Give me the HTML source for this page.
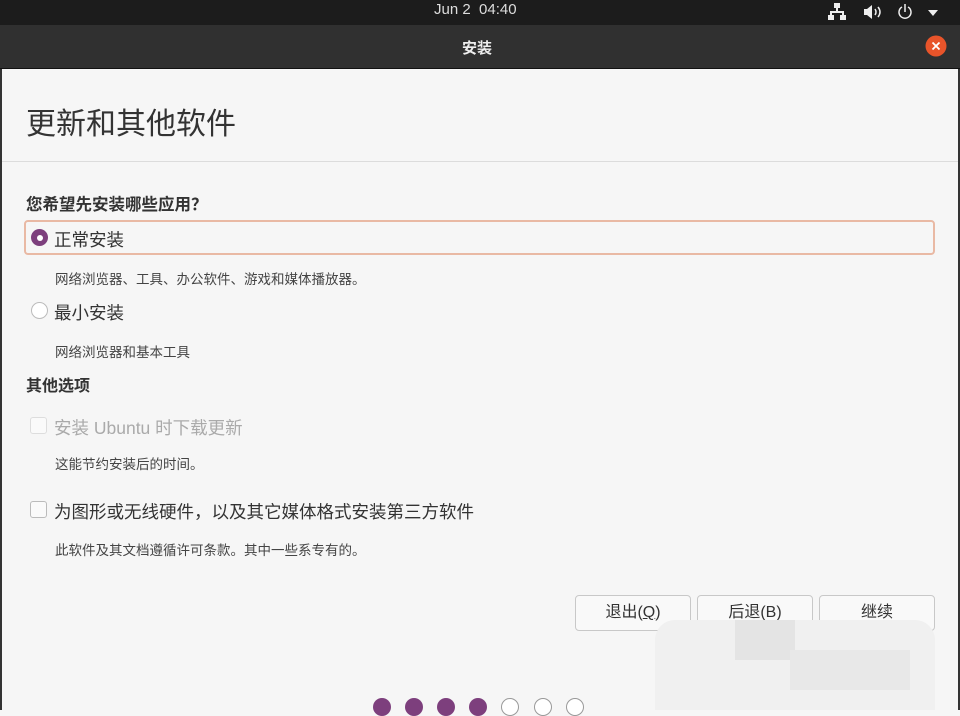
<!DOCTYPE html>
<html><head><meta charset="utf-8">
<style>
*{margin:0;padding:0;box-sizing:border-box}
body{width:960px;height:710px;overflow:hidden;background:#f6f6f6;font-family:"Liberation Sans","Noto Sans CJK SC",sans-serif;position:relative;color:#333}
.a{position:absolute;white-space:nowrap}
#top{left:0;top:0;width:960px;height:25px;background:#1c1c1c;color:#ddd;font-size:15px}
#tb{left:0;top:25px;width:960px;height:44px;background:#303030;border-bottom:1px solid #111}
#win{left:0;top:69px;width:960px;height:641px;background:#f6f6f6;border-left:2px solid #333;border-right:2px solid #333}
.s{font-size:13.5px;color:#444}
.b{font-weight:bold;font-size:16px;color:#333}
.radio{width:17px;height:17px;border-radius:50%}
.cb{width:17px;height:17px;border:1px solid #bbb;border-radius:3px;background:#fafafa}
.btn{top:595px;width:116px;height:36px;border:1px solid #c8c8c8;border-radius:4px;background:#f9f9f9;font-size:16px;text-align:center;line-height:34px;color:#333}
.dot{top:698px;width:18px;height:18px;border-radius:50%}
.f{background:#7d3f7d}
.e{border:1.5px solid #999;background:#fff}
</style></head><body>
<div id="top" class="a"><div class="a" style="left:434px;top:1px">Jun 2&nbsp; 04:40</div>
<svg class="a" style="left:828px;top:2px" width="120" height="20" viewBox="0 0 120 20">
<g fill="#eee"><rect x="6" y="1" width="6" height="5"/><rect x="8" y="6" width="2" height="4"/><rect x="2" y="9" width="14" height="2"/><rect x="2" y="9" width="2" height="5"/><rect x="14" y="9" width="2" height="5"/><rect x="0" y="13" width="6" height="5"/><rect x="12" y="13" width="6" height="5"/>
<path d="M36 7h3l5-4v14l-5-4h-3z"/></g>
<g fill="none" stroke="#eee" stroke-width="1.5"><path d="M47 7q2 3 0 6M50 5q4 5 0 10"/><path d="M74 5a6 6 0 1 0 6 0"/><path d="M77 2v8"/></g>
<path d="M100 8h10l-5 6z" fill="#eee"/></svg></div>
<div id="tb" class="a"><div class="a" style="left:462px;top:12px;color:#eee;font-size:15px;font-weight:bold">安装</div>
<svg class="a" style="left:925px;top:10px" width="22" height="22"><circle cx="11" cy="11" r="10.5" fill="#e8542a"/><path d="M7.5 7.5l7 7M14.5 7.5l-7 7" stroke="#fff" stroke-width="1.8"/></svg></div>
<div id="win" class="a"></div>
<div class="a" style="left:26px;top:99px;font-size:30px;color:#333">更新和其他软件</div>
<div class="a" style="left:2px;top:161px;width:956px;height:1px;background:#dcdcdc"></div>
<div class="a b" style="left:26px;top:191px;font-size:16.5px">您希望先安装哪些应用？</div>
<div class="a" style="left:24px;top:220px;width:911px;height:35px;border:2px solid #e9b9a4;border-radius:4px"></div>
<div class="a radio" style="left:31px;top:229px;background:#7d3f7d"><div class="a" style="left:5.5px;top:5.5px;width:6px;height:6px;border-radius:50%;background:#fff"></div></div>
<div class="a" style="left:54px;top:227px;font-size:17.5px">正常安装</div>
<div class="a s" style="left:55px;top:268px">网络浏览器、工具、办公软件、游戏和媒体播放器。</div>
<div class="a radio" style="left:31px;top:302px;border:1px solid #bbb;background:#fff"></div>
<div class="a" style="left:54px;top:300px;font-size:17.5px">最小安装</div>
<div class="a s" style="left:55px;top:341px">网络浏览器和基本工具</div>
<div class="a b" style="left:26px;top:372px">其他选项</div>
<div class="a cb" style="left:30px;top:417px;border-color:#ddd"></div>
<div class="a" style="left:54px;top:415px;font-size:17.5px;color:#aaa">安装 Ubuntu 时下载更新</div>
<div class="a s" style="left:55px;top:453px">这能节约安装后的时间。</div>
<div class="a cb" style="left:30px;top:501px"></div>
<div class="a" style="left:54px;top:499px;font-size:17.5px;color:#333">为图形或无线硬件，以及其它媒体格式安装第三方软件</div>
<div class="a s" style="left:55px;top:539px">此软件及其文档遵循许可条款。其中一些系专有的。</div>
<div class="a btn" style="left:575px">退出(<u>Q</u>)</div>
<div class="a btn" style="left:697px">后退(B)</div>
<div class="a btn" style="left:819px">继续</div>
<div class="a" style="left:655px;top:620px;width:280px;height:90px;background:#f0f0f0;border-radius:20px 20px 0 0"></div>
<div class="a" style="left:735px;top:620px;width:60px;height:40px;background:#e4e4e4"></div>
<div class="a" style="left:790px;top:650px;width:120px;height:40px;background:#e8e8e8"></div>
<div class="a dot f" style="left:373px"></div><div class="a dot f" style="left:405px"></div><div class="a dot f" style="left:437px"></div><div class="a dot f" style="left:469px"></div>
<div class="a dot e" style="left:501px"></div><div class="a dot e" style="left:534px"></div><div class="a dot e" style="left:566px"></div>
</body></html>
